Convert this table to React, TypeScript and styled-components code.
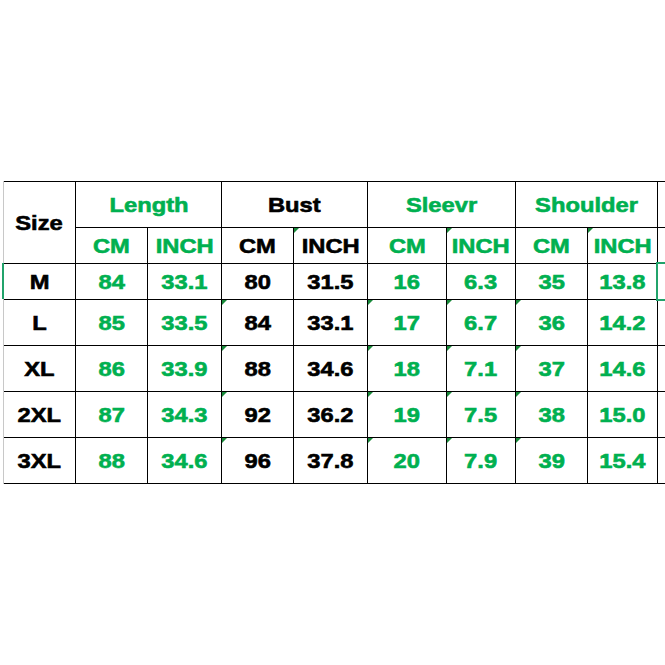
import React from "react";
import styled, { createGlobalStyle } from "styled-components";

const Global = createGlobalStyle`
  html, body { margin: 0; padding: 0; background: #ffffff; }
  body { overflow: hidden; font-family: "Liberation Sans", Arial, sans-serif; }
`;

const Page = styled.div`
  width: 665px;
  height: 665px;
  padding-top: 181px;
  box-sizing: border-box;
  background: #ffffff;
  overflow: hidden;
`;

const Sheet = styled.div`
  position: relative;
  margin-left: 3px;
  border-left: 1px solid #c8c8c8;
`;

const Grid = styled.div`
  display: grid;
  grid-template-columns: 71px 71px 73px 71px 73px 78px 68px 71px 69px 7px;
  grid-template-rows: 45px 35px 35px 45px 45px 45px 45px;
  gap: 1px;
  padding: 1px 0;
  background: #000000;
`;

type Tone = "green" | "black";

const Cell = styled.div<{ $tone: Tone; $flag?: boolean; $cols?: number; $rows?: number }>`
  position: relative;
  background: #ffffff;
  display: flex;
  align-items: center;
  justify-content: center;
  color: ${(p) => (p.$tone === "green" ? "#00b050" : "#000000")};
  font-weight: 700;
  font-size: 21px;
  line-height: 1;
  -webkit-text-stroke: 0.6px currentColor;
  grid-column: span ${(p) => p.$cols ?? 1};
  grid-row: span ${(p) => p.$rows ?? 1};
  &::before {
    content: "";
    display: ${(p) => (p.$flag ? "block" : "none")};
    position: absolute;
    left: 0;
    top: 0;
    border-top: 5px solid #188a3a;
    border-right: 5px solid transparent;
  }
`;

const Filler = styled.div`
  background: #ffffff;
`;

const Label = styled.span`
  display: inline-block;
  transform: scaleX(1.13);
  white-space: nowrap;
`;

const Selection = styled.div`
  position: absolute;
  left: 652px;
  top: 81px;
  width: 14px;
  height: 39px;
  box-sizing: border-box;
  border: 2px solid #21a36b;
`;

const RowMark = styled.div`
  position: absolute;
  left: -2px;
  top: 82px;
  width: 2px;
  height: 36px;
  background: #21a36b;
`;

type Group = { name: string; tone: Tone };
const groups: Group[] = [
  { name: "Length", tone: "green" },
  { name: "Bust", tone: "black" },
  { name: "Sleevr", tone: "green" },
  { name: "Shoulder", tone: "green" },
];

// tone per data column (index 0 = Size)
const colTones: Tone[] = ["black", "green", "green", "black", "black", "green", "green", "green", "green"];
const subFlags = [false, false, false, true, false, true, false, true];
const dataFlags = [false, false, false, true, false, true, true, true, false];

const rows: string[][] = [
  ["M", "84", "33.1", "80", "31.5", "16", "6.3", "35", "13.8"],
  ["L", "85", "33.5", "84", "33.1", "17", "6.7", "36", "14.2"],
  ["XL", "86", "33.9", "88", "34.6", "18", "7.1", "37", "14.6"],
  ["2XL", "87", "34.3", "92", "36.2", "19", "7.5", "38", "15.0"],
  ["3XL", "88", "34.6", "96", "37.8", "20", "7.9", "39", "15.4"],
];

export default function App() {
  return (
    <Page>
      <Global />
      <Sheet>
        <Grid>
          <Cell $tone="black" $rows={2}>
            <Label>Size</Label>
          </Cell>
          {groups.map((g) => (
            <Cell key={g.name} $tone={g.tone} $cols={2}>
              <Label>{g.name}</Label>
            </Cell>
          ))}
          <Filler />
          {groups.flatMap((g, gi) =>
            ["CM", "INCH"].map((u, ui) => (
              <Cell key={g.name + u} $tone={g.tone} $flag={subFlags[gi * 2 + ui]}>
                <Label>{u}</Label>
              </Cell>
            ))
          )}
          <Filler />
          {rows.map((r, ri) => (
            <React.Fragment key={r[0]}>
              {r.map((v, ci) => (
                <Cell key={ci} $tone={colTones[ci]} $flag={ri > 0 && dataFlags[ci]}>
                  <Label>{v}</Label>
                </Cell>
              ))}
              <Filler />
            </React.Fragment>
          ))}
        </Grid>
        <RowMark />
        <Selection />
      </Sheet>
    </Page>
  );
}
